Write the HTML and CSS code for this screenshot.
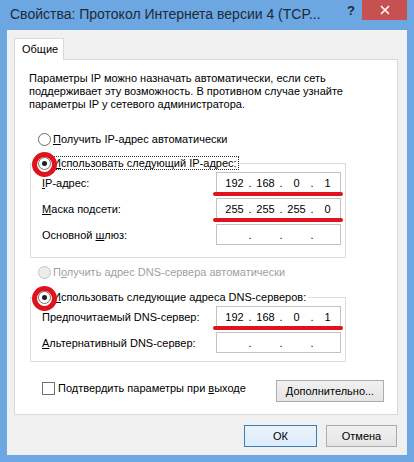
FILE: index.html
```html
<!DOCTYPE html>
<html lang="ru">
<head>
<meta charset="UTF-8">
<meta name="viewport" content="width=device-width, initial-scale=1.0">
<title>Свойства: Протокол Интернета версии 4 (TCP/IPv4)</title>
<link rel="stylesheet" href="styles.css">
</head>
<body>
<div class="window">
    <div class="titlebar">
        <span class="title">Свойства: Протокол Интернета версии 4 (TCP...</span>
        <span class="help">?</span>
        <span class="close">
            <svg width="10" height="10" viewBox="0 0 10 10"><path d="M1 1 L9 9 M9 1 L1 9" stroke="#fff" stroke-width="1.6"/></svg>
        </span>
    </div>

    <div class="client">
        <div class="tabs"><span class="tab">Общие</span></div>

        <div class="panel">
            <p class="intro">Параметры IP можно назначать автоматически, если сеть<br>поддерживает эту возможность. В противном случае узнайте<br>параметры IP у сетевого администратора.</p>

            <div class="option first">
                <span class="radio"></span>
                <span><u>П</u>олучить IP-адрес автоматически</span>
            </div>

            <fieldset class="group ip-group">
                <legend class="option">
                    <span class="radio checked"></span>
                    <span class="focus"><u>И</u>спользовать следующий IP-адрес:</span>
                    <span class="ring"></span>
                </legend>
                <div class="field-row">
                    <span class="label"><u>I</u>P-адрес:</span>
                    <div class="ip marked"><span>192</span><i>.</i><span>168</span><i>.</i><span>0</span><i>.</i><span>1</span></div>
                </div>
                <div class="field-row">
                    <span class="label"><u>М</u>аска подсети:</span>
                    <div class="ip marked"><span>255</span><i>.</i><span>255</span><i>.</i><span>255</span><i>.</i><span>0</span></div>
                </div>
                <div class="field-row">
                    <span class="label">Основной <u>ш</u>люз:</span>
                    <div class="ip"><span></span><i>.</i><span></span><i>.</i><span></span><i>.</i><span></span></div>
                </div>
            </fieldset>

            <div class="option disabled dns-auto">
                <span class="radio"></span>
                <span>П<u>о</u>лучить адрес DNS-сервера автоматически</span>
            </div>

            <fieldset class="group dns-group">
                <legend class="option">
                    <span class="radio checked"></span>
                    <span><u>И</u>спользовать следующие адреса DNS-серверов:</span>
                    <span class="ring"></span>
                </legend>
                <div class="field-row">
                    <span class="label">Пре<u>д</u>почитаемый DNS-сервер:</span>
                    <div class="ip marked"><span>192</span><i>.</i><span>168</span><i>.</i><span>0</span><i>.</i><span>1</span></div>
                </div>
                <div class="field-row">
                    <span class="label"><u>А</u>льтернативный DNS-сервер:</span>
                    <div class="ip"><span></span><i>.</i><span></span><i>.</i><span></span><i>.</i><span></span></div>
                </div>
            </fieldset>

            <div class="panel-bottom">
                <div class="check-row">
                    <span class="checkbox"></span>
                    <span>Подтвердить параметры при <u>в</u>ыходе</span>
                </div>
                <button class="btn advanced"><u>Д</u>ополнительно...</button>
            </div>
        </div>

        <div class="dialog-buttons">
            <button class="btn default ok">ОК</button>
            <button class="btn cancel">Отмена</button>
        </div>
    </div>
</div>
</body>
</html>
```

FILE: styles.css
```css
body {
    margin: 0;
    font-family: "Liberation Sans", Arial, sans-serif;
    font-size: 11px;
    color: #000;
}

.window {
    width: 414px;
    height: 462px;
    background: #6ca7e1;
    box-sizing: border-box;
    padding: 0 7px 7px;
}

/* title bar */

.titlebar {
    height: 30px;
    display: flex;
    align-items: flex-start;
}

.title {
    flex: 1;
    padding: 6px 0 0 3px;
    font-size: 14px;
    color: #1c2a3a;
    white-space: nowrap;
}

.help {
    width: 22px;
    padding-top: 3px;
    font-size: 13px;
    font-weight: bold;
    color: #1c2a3a;
    text-align: center;
    margin-right: 0;
}

.close {
    width: 45px;
    height: 20px;
    background: #c75050;
    display: flex;
    align-items: center;
    justify-content: center;
}

/* client area */

.client {
    height: 425px;
    background: #f0f0f0;
    padding: 8px 9px 0 7px;
    box-sizing: border-box;
}

.tabs {
    display: flex;
    height: 21px;
}

.tab {
    width: 50px;
    height: 22px;
    box-sizing: border-box;
    background: #fff;
    border: 1px solid #d9d9d9;
    border-bottom: none;
    padding: 4px 0 0 7px;
    position: relative;
    z-index: 1;
}

.panel {
    height: 356px;
    box-sizing: border-box;
    background: #fff;
    border: 1px solid #d9d9d9;
    padding: 12px 12px 0 14px;
}

.intro {
    margin: 0;
    line-height: 13px;
}

.option {
    display: flex;
    align-items: center;
    height: 18px;
    gap: 2px;
    white-space: nowrap;
}

.option.first {
    margin: 19px 0 0 9px;
}

.radio {
    width: 13px;
    height: 13px;
    box-sizing: border-box;
    border: 1px solid #6e6e6e;
    border-radius: 50%;
    background: #fff;
    display: flex;
    align-items: center;
    justify-content: center;
    flex: none;
}

.radio.checked::after {
    content: "";
    width: 5px;
    height: 5px;
    border-radius: 50%;
    background: #1e1e1e;
}

.disabled {
    color: #a0a0a0;
}

.disabled .radio {
    border-color: #c4c4c4;
    background: #ececec;
}

.focus {
    outline: 1px dotted #333;
    outline-offset: 0;
    padding-right: 1px;
}

/* red annotation marks */

.ring {
    position: absolute;
    left: -6px;
    top: -2px;
    width: 25px;
    height: 25px;
    box-sizing: border-box;
    border: 5px solid #e0121d;
    border-radius: 50%;
}

.ip.marked::after {
    content: "";
    position: absolute;
    left: -4px;
    right: -3px;
    bottom: -4px;
    height: 4px;
    border-radius: 2px;
    background: #e0121d;
}

/* group boxes */

.group {
    margin: 6px 0 0 1px;
    width: 316px;
    box-sizing: border-box;
    border: 1px solid #dcdcdc;
    padding: 0 4px 12px 11px;
}

.group legend {
    position: relative;
    padding: 0 2px 0 0;
    margin-left: -4px;
    background: #fff;
}

.dns-group {
    margin-top: 7px;
    padding-bottom: 8px;
}

.dns-auto {
    margin: 5px 0 0 9px;
}

.field-row {
    display: flex;
    justify-content: space-between;
    align-items: center;
    margin-top: 5px;
}

.field-row:first-of-type {
    margin-top: 0;
}

.ip {
    position: relative;
    width: 125px;
    height: 21px;
    box-sizing: border-box;
    border: 1px solid #c2c2c2;
    background: #fff;
    display: flex;
    align-items: center;
    padding: 0 0 0 6px;
}

.ip span {
    width: 23px;
    text-align: center;
}

.ip i {
    width: 8px;
    font-style: normal;
    text-align: center;
}

/* bottom of panel */

.panel-bottom {
    display: flex;
    justify-content: space-between;
    align-items: flex-start;
    margin-top: 18px;
}

.check-row {
    display: flex;
    align-items: center;
    gap: 3px;
    margin: 1px 0 0 13px;
    height: 14px;
}

.checkbox {
    width: 13px;
    height: 13px;
    box-sizing: border-box;
    border: 1px solid #707070;
    background: #fff;
}

.btn {
    font-family: inherit;
    font-size: 11px;
    color: #000;
    height: 22px;
    padding: 0;
    border: 1px solid #acacac;
    background: linear-gradient(#f0f0f0, #e5e5e5);
}

.advanced {
    width: 108px;
    margin-right: 1px;
}

.dialog-buttons {
    display: flex;
    justify-content: flex-end;
    gap: 9px;
    margin: 10px 1px 0 0;
}

.ok {
    width: 73px;
}

.cancel {
    width: 71px;
}

.btn.default {
    border-color: #3c7fb1;
    background: linear-gradient(#eaf3fb, #dcecfc);
}
```
